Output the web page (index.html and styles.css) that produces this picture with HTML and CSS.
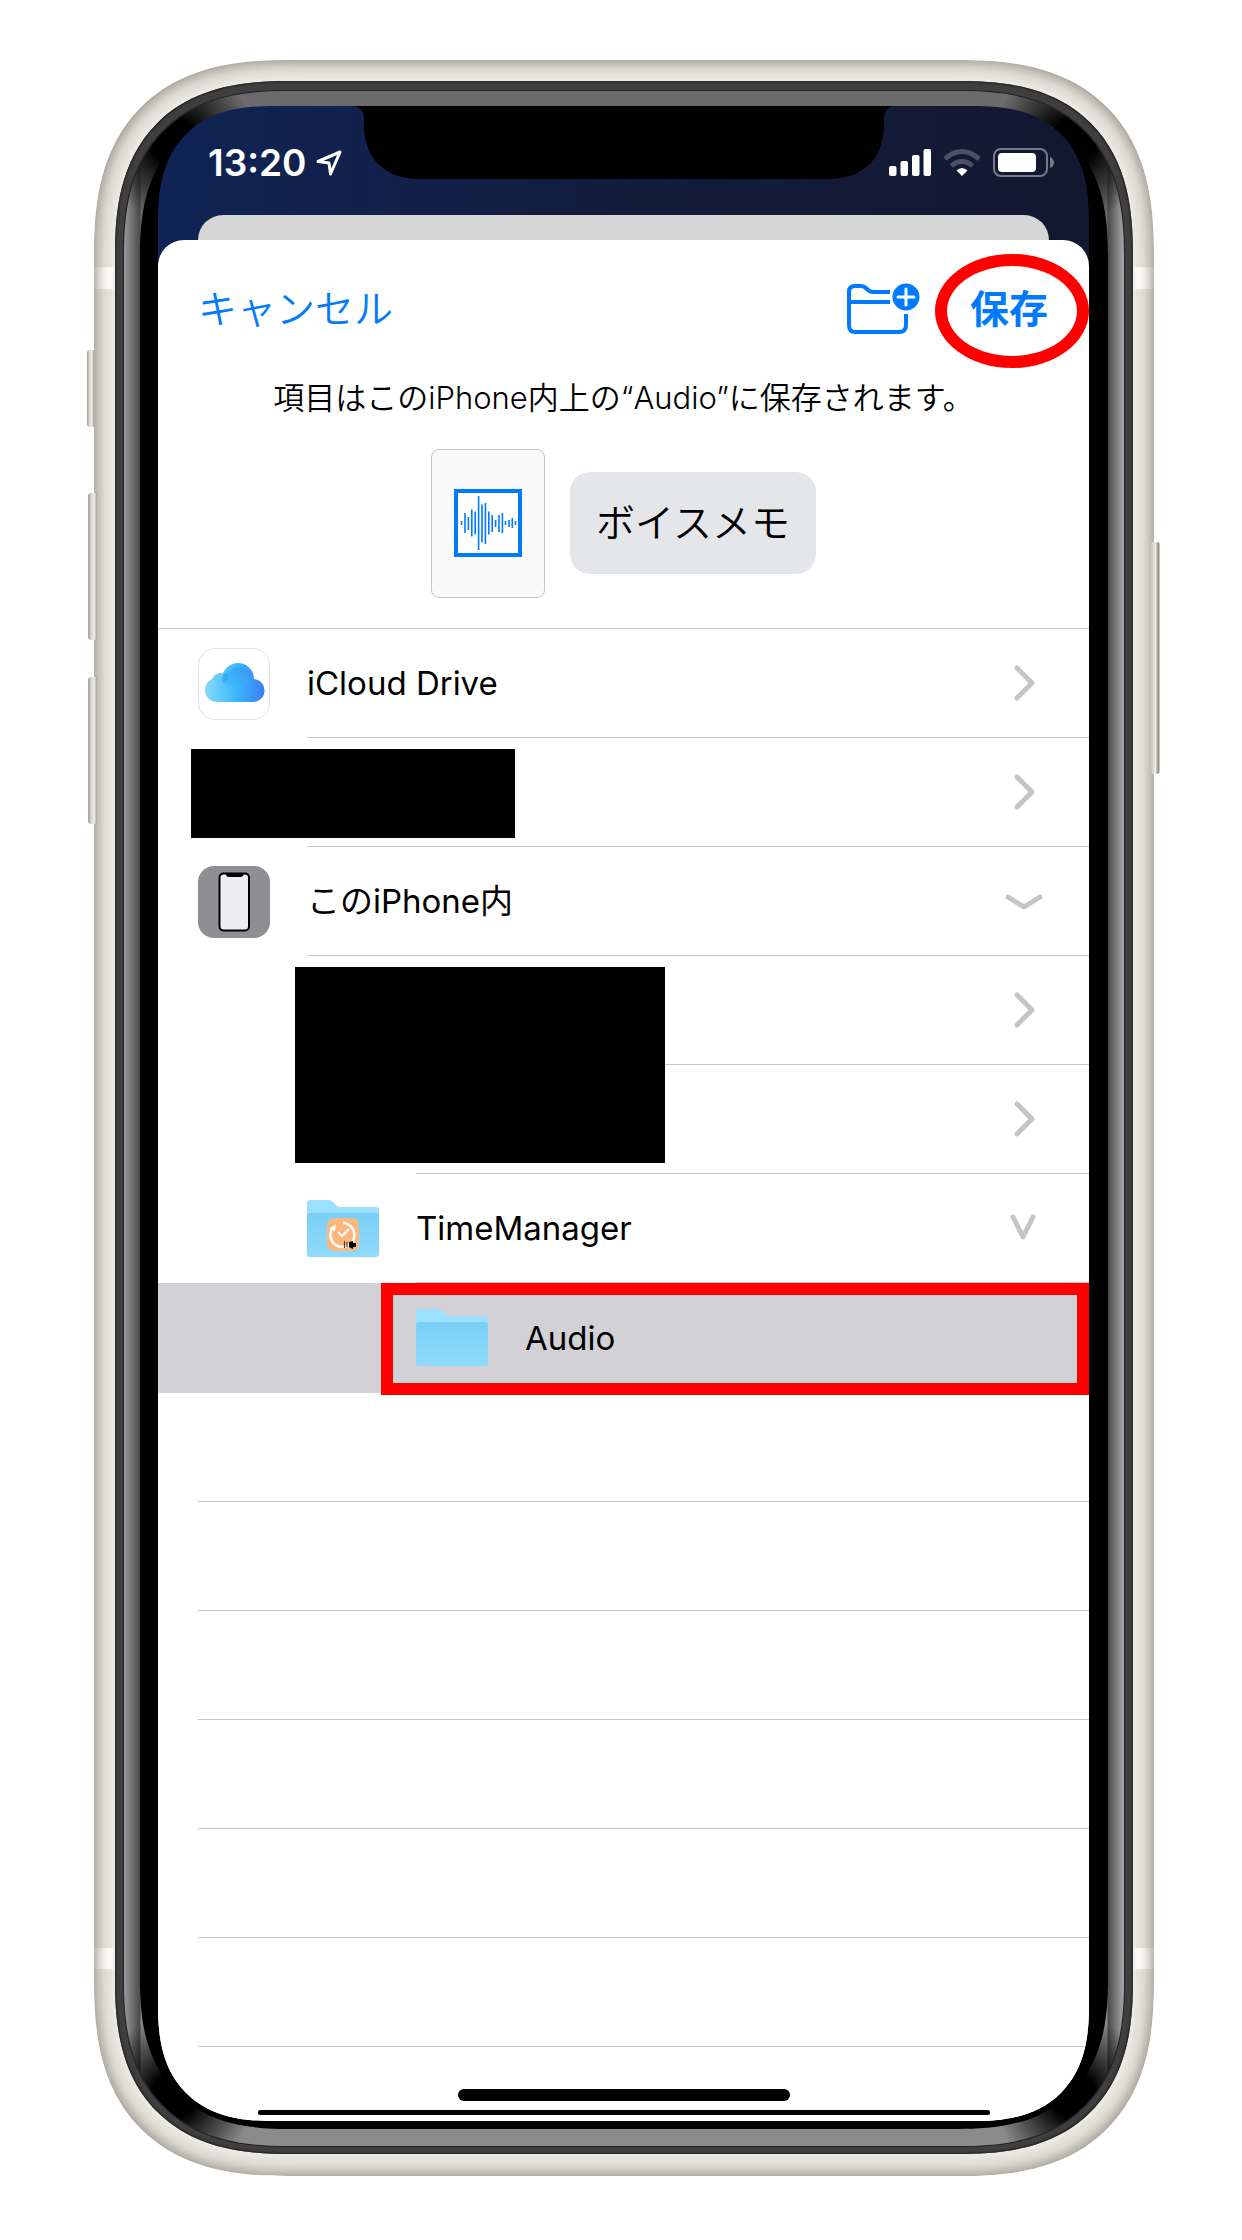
FILE: index.html
```html
<!DOCTYPE html>
<html lang="ja">
<head>
<meta charset="utf-8">
<meta name="viewport" content="width=device-width, initial-scale=1">
<title>ファイルに保存</title>
<link rel="stylesheet" href="styles.css">
</head>
<body>
<svg class="defs" width="0" height="0" aria-hidden="true">
  <defs>
    <linearGradient id="folderFront" x1="0" y1="0" x2="0" y2="1">
      <stop offset="0" stop-color="#79cff6"/>
      <stop offset="1" stop-color="#90dafc"/>
    </linearGradient>
    <linearGradient id="cloudFill" x1="0" y1="0" x2="1" y2="0">
      <stop offset="0" stop-color="#8ad9f6"/>
      <stop offset=".25" stop-color="#62cbfb"/>
      <stop offset=".55" stop-color="#38b6fc"/>
      <stop offset="1" stop-color="#3c7df4"/>
    </linearGradient>
    <linearGradient id="cloudTop" x1="0" y1="1" x2="1" y2="0">
      <stop offset="0" stop-color="#3fc2ff"/>
      <stop offset="1" stop-color="#378af0"/>
    </linearGradient>
    <symbol id="folder" viewBox="0 0 72 57">
      <path d="M3 0H22Q24 0 26 2L30 6Q31 7 33 7H69Q72 7 72 10V30H0V3Q0 0 3 0Z" fill="#9be0ff"/>
      <path d="M0 16Q0 13 3 13H69Q72 13 72 16V54Q72 57 69 57H3Q0 57 0 54Z" fill="url(#folderFront)"/>
    </symbol>
  </defs>
</svg>
<main class="phone">
  <span class="key key-mute"></span>
  <span class="key key-up"></span>
  <span class="key key-down"></span>
  <span class="key key-side"></span>
  <div class="rim"><div class="glow"><div class="bezel"><div class="screen">
    <svg class="notch" viewBox="0 0 544 73" aria-hidden="true"><path d="M0 0H544C535 1 532 5 532 13V18C532 52 512 73 476 73H68C32 73 12 52 12 18V13C12 5 9 1 0 0Z" fill="#000"/></svg>
    <header class="status">
      <div class="status-side">
        <time>13:20</time>
        <svg width="26" height="26" viewBox="0 0 26 26" aria-hidden="true"><path d="M2 11.500L24 2L14.500 24L13 13Z" fill="none" stroke="#fff" stroke-width="3" stroke-linejoin="round"/></svg>
      </div>
      <div class="status-side">
        <svg width="42" height="28" viewBox="0 0 42 28" aria-hidden="true" fill="#fff"><rect y="17" width="7.500" height="10" rx="2"/><rect x="11.500" y="12" width="7.500" height="15" rx="2"/><rect x="23" y="6" width="7.500" height="21" rx="2"/><rect x="34.500" width="7.500" height="27" rx="2"/></svg>
        <svg width="38" height="28" viewBox="0 0 38 28" aria-hidden="true"><g fill="none" stroke="#fff" stroke-opacity=".24" stroke-width="5"><path d="M2 10Q10 2.500 19 2.500T36 10"/><path d="M8.500 17Q13 12.500 19 12.500T29.500 17"/></g><path d="M19 27L13.500 21.500Q16 19 19 19T24.500 21.500Z" fill="#fff"/></svg>
        <svg width="61" height="29" viewBox="0 0 61 29" aria-hidden="true"><rect x="1" y="1" width="53" height="27" rx="7" fill="none" stroke="#fff" stroke-opacity=".42" stroke-width="2"/><rect x="5" y="5" width="38" height="19" rx="4" fill="#fff"/><path d="M57 9Q61 10.500 61 14.500T57 20Z" fill="#fff" fill-opacity=".42"/></svg>
      </div>
    </header>
    <div class="behind"></div>
    <section class="sheet">
      <nav class="toolbar">
        <button class="cancel" type="button">キャンセル</button>
        <button class="new-folder" type="button" aria-label="新規フォルダ">
          <svg width="74" height="52" viewBox="0 0 74 52"><g fill="none" stroke="#007aff" stroke-width="4"><path d="M44 9H27Q24 9 22 7L20.500 5.500Q18 3 15 3H9Q3 3 3 9V42Q3 49 9 49H53Q60 49 60 42V31"/><path d="M3 19H44"/></g><circle cx="60" cy="14" r="13.500" fill="#007aff"/><path d="M60 6V22M52 14H68" stroke="#fff" stroke-width="3" stroke-linecap="round"/></svg>
        </button>
        <button class="save" type="button">保存</button>
      </nav>
      <p class="note">項目はこのiPhone内上の“Audio”に保存されます。</p>
      <div class="item">
        <div class="thumb">
          <svg width="68" height="68" viewBox="0 0 68 68" aria-hidden="true"><rect x="2" y="2" width="64" height="64" fill="#fff" stroke="#007aff" stroke-width="4"/><path d="M7.500 32v4M11 24v20M14.400 28v13M17.800 20.500v27M21.200 22.500v23M24.600 7v54M28 15.500v38M31.400 14v41M34.800 22.500v23M38.200 26v17M41.600 31v7M45 26v17M48.400 24v20M51.500 32v4M55 31v7M58.300 29v10M61.500 32v4" stroke="#007aff" stroke-width="1.600"/></svg>
        </div>
        <button class="name" type="button">ボイスメモ</button>
      </div>
      <ul class="places">
        <li class="row">
          <svg class="icon" viewBox="0 0 72 72" aria-hidden="true"><rect x=".5" y=".5" width="71" height="71" rx="16" fill="#fff" stroke="#e2e2e2"/><path d="M18.500 54A12 12 0 0 1 14 31A9 9 0 0 1 25 25.500A16 16 0 0 1 56 31A11.500 11.500 0 0 1 54 54Z" fill="url(#cloudFill)"/><path d="M25 32A16 16 0 0 1 56 31Q50 33 46 38L27 38Q30 31 25 32Z" fill="url(#cloudTop)" opacity=".7"/><path d="M25 26Q29 24 30 28Q31 33 26 36Q23 32 25 26Z" fill="#21a9ec" opacity=".6"/></svg>
          <div class="cell"><span>iCloud Drive</span><button class="toggle" type="button" aria-label="開く"><svg width="22" height="36" viewBox="0 0 22 36"><path d="M4 3L19 18L4 33"/></svg></button></div>
        </li>
        <li class="row redacted">
          <span class="icon"></span>
          <div class="cell"><span></span><button class="toggle" type="button" aria-label="開く"><svg width="22" height="36" viewBox="0 0 22 36"><path d="M4 3L19 18L4 33"/></svg></button></div>
        </li>
        <li class="row">
          <svg class="icon" viewBox="0 0 72 72" aria-hidden="true"><rect width="72" height="72" rx="16" fill="#8e8e93"/><rect x="21.500" y="7.500" width="29.500" height="57" rx="4" fill="#eeeef0" stroke="#000" stroke-width="2"/><path d="M27 7H46V8Q45 11 43 11H31Q28 11 28 8Z"/></svg>
          <div class="cell"><span>このiPhone内</span><button class="toggle" type="button" aria-label="閉じる"><svg width="38" height="22" viewBox="0 0 38 22"><path d="M3 7L19 17L35 7"/></svg></button></div>
        </li>
        <li class="row level-2 redacted-pair">
          <span class="icon"></span>
          <div class="cell"><span></span><button class="toggle" type="button" aria-label="開く"><svg width="22" height="36" viewBox="0 0 22 36"><path d="M4 3L19 18L4 33"/></svg></button></div>
        </li>
        <li class="row level-2">
          <span class="icon"></span>
          <div class="cell"><span></span><button class="toggle" type="button" aria-label="開く"><svg width="22" height="36" viewBox="0 0 22 36"><path d="M4 3L19 18L4 33"/></svg></button></div>
        </li>
        <li class="row level-2">
          <svg class="icon" viewBox="0 -7 72 72" aria-hidden="true"><use href="#folder" width="72" height="57"/><rect x="20" y="18" width="32" height="33" rx="7" fill="#fdb67c"/><path d="M36 23A12 12 0 1 1 25 29" fill="none" stroke="#fff" stroke-width="2.500"/><path d="M22 29L29 24L28 31Z" fill="#fff"/><path d="M31 32L35 36L42 29" fill="none" stroke="#fff" stroke-width="2"/><path d="M42 42L46 41V43H49V47H46V49L42 47Z"/><path d="M40 42v5M37.500 41v7" stroke="#54402e" stroke-width="1.200"/></svg>
          <div class="cell"><span>TimeManager</span><button class="toggle" type="button" aria-label="閉じる"><svg width="28" height="30" viewBox="0 0 28 30"><path d="M3 4L13 24L23 4"/></svg></button></div>
        </li>
        <li class="row level-3 selected">
          <svg class="icon" viewBox="0 -7 72 72" aria-hidden="true"><use href="#folder" width="72" height="57"/></svg>
          <div class="cell"><span>Audio</span></div>
        </li>
        <li class="row empty"></li>
        <li class="row empty"></li>
        <li class="row empty"></li>
        <li class="row empty"></li>
        <li class="row empty"></li>
        <li class="row empty"></li>
      </ul>
      <footer class="home">
        <div class="home-bar"></div>
        <div class="home-line"></div>
      </footer>
    </section>
  </div></div></div></div>
</main>
</body>
</html>
```
FILE: styles.css
```css
*, *::before, *::after { box-sizing: border-box; }
body {
  margin: 0;
  padding: 60px 88px 65px 94px;
  background: #fff;
  color: #000;
  font-family: Inter, "Noto Sans CJK JP", sans-serif;
  font-size: 33px;
  line-height: 40px;
}
button {
  margin: 0;
  padding: 0;
  border: 0;
  background: none;
  color: inherit;
  font: inherit;
  cursor: pointer;
}
svg { display: block; flex: none; }
.defs { position: absolute; }

/* Handset */
.phone {
  position: relative;
  padding: 21px 21px 22px;
  border-radius: 164px;
  background:
    linear-gradient(#fffdf8, #fffdf8) 0 207px / 100% 22px no-repeat,
    linear-gradient(#fffdf8, #fffdf8) 0 calc(100% - 207px) / 100% 21px no-repeat,
    #e6e4dc;
  box-shadow: inset 0 0 14px 3px #99958b;
}
.rim {
  position: relative;
  padding: 10px 9px 8px;
  border-radius: 148px;
  background: #3f3f3f;
  box-shadow: inset 0 0 2px 1px #222, 0 0 4px 2px #efede6;
}
.glow {
  padding: 15px 16px 17px;
  border-radius: 140px;
  background:
    radial-gradient(circle at 50px 50px, #000 22px, transparent 80px) 0 0 / 50% 50% no-repeat,
    radial-gradient(circle at calc(100% - 50px) 50px, #000 22px, transparent 80px) 100% 0 / 50% 50% no-repeat,
    radial-gradient(circle at 50px calc(100% - 50px), #000 22px, transparent 80px) 0 100% / 50% 50% no-repeat,
    radial-gradient(circle at calc(100% - 50px) calc(100% - 50px), #000 22px, transparent 80px) 100% 100% / 50% 50% no-repeat,
    linear-gradient(90deg, #9a9a9a, #4a4a4a 16px, transparent 17px calc(100% - 17px), #4a4a4a calc(100% - 16px), #a8a8a8),
    linear-gradient(#6b6b6b 50%, #8a8a8a 50%);
  box-shadow: 0 0 0 1px #222;
}
.bezel {
  padding: 0 19px 8px 18px;
  border-radius: 130px;
  background: #000;
}
.screen {
  position: relative;
  overflow: hidden;
  border-radius: 96px;
  background: linear-gradient(90deg, #0f2454, #12204a 25%, #121d3c 50%, #131830) top / 100% 300px no-repeat, #fff;
}
@supports (corner-shape: superellipse(1.3)) {
  .phone, .rim, .glow, .bezel, .screen { corner-shape: superellipse(1.32); }
  .phone { border-radius: 194px; }
  .rim { border-radius: 174px; }
  .glow { border-radius: 165px; }
  .bezel { border-radius: 150px; }
  .screen { border-radius: 116px; }
}
.key {
  position: absolute;
  left: -6px;
  width: 9px;
  height: 147px;
  border-radius: 3px 0 0 3px;
  background: linear-gradient(90deg, #a19d92, #dedcd6 40%, #eceae6 70%, #a5a197);
}
.key-mute { top: 290px; left: -7px; width: 7px; height: 77px; }
.key-up { top: 433px; }
.key-down { top: 617px; }
.key-side {
  top: 482px;
  left: auto;
  right: -6px;
  height: 232px;
  border-radius: 0 3px 3px 0;
  background: linear-gradient(90deg, #c5c2b6, #eeece3 50%, #8f8c80 80%, #dad8cf);
}
.notch {
  position: absolute;
  top: 0;
  left: 50%;
  width: 544px;
  height: 73px;
  transform: translateX(-50%);
}

/* Status bar */
.status {
  display: flex;
  justify-content: space-between;
  align-items: center;
  height: 109px;
  padding: 4px 35px 0 50px;
  color: #fff;
  font-size: 37px;
  font-weight: 600;
}
.status-side { display: flex; align-items: center; gap: 12px; }
.status-side time + svg { margin-left: -2px; }
.behind {
  height: 25px;
  margin: 0 40px;
  border-radius: 25px 25px 0 0;
  background: #d6d6d6;
}

/* Save sheet */
.sheet { border-radius: 26px 26px 0 0; background: #fff; }
.toolbar {
  display: flex;
  align-items: center;
  height: 138px;
  padding-right: 41px;
  padding-left: 40px;
  color: #007aff;
  font-size: 39px;
}
.cancel { margin-right: auto; font-weight: 350; }
.new-folder { margin-right: 50px; }
.save { position: relative; font-weight: 700; }
.save::after {
  content: "";
  position: absolute;
  top: -17px;
  right: -41px;
  width: 154px;
  height: 114px;
  margin-top: -18px;
  border: 12px solid #f00;
  border-radius: 50%;
}
.note {
  margin: 0;
  font-size: 31px;
  font-weight: 350;
  text-align: center;
}
.item {
  display: flex;
  justify-content: center;
  align-items: center;
  gap: 25px;
  height: 211px;
  border-bottom: 1px solid #c4c4c6;
}
.thumb {
  display: grid;
  place-items: center;
  width: 114px;
  height: 149px;
  border: 1px solid #c6c6c6;
  border-radius: 8px;
  background: #fafafa;
}
.name {
  height: 102px;
  padding: 0 26px;
  border-radius: 20px;
  background: #e5e6ea;
  font-size: 39px;
  font-weight: 350;
}
.places { margin: 0; padding: 0; list-style: none; }
.row {
  position: relative;
  display: flex;
  align-items: center;
  gap: 37px;
  height: 109px;
  padding-left: 40px;
}
.level-2 { padding-left: 149px; }
.level-3 { padding-left: 258px; }
.icon { width: 72px; height: 72px; }
.cell {
  display: flex;
  flex: 1;
  justify-content: space-between;
  align-items: center;
  height: 100%;
  padding-right: 45px;
  border-bottom: 1px solid #c8c8ca;
}
.toggle { display: grid; place-items: center; width: 40px; height: 60px; }
.toggle path {
  fill: none;
  stroke: #c5c5c7;
  stroke-width: 5;
  stroke-linecap: round;
  stroke-linejoin: round;
}
.redacted::after,
.redacted-pair::after {
  content: "";
  position: absolute;
  top: 11px;
  left: 33px;
  width: 324px;
  height: 89px;
  background: #000;
}
.redacted-pair::after {
  z-index: 1;
  left: 137px;
  width: 370px;
  height: 196px;
}
.selected { height: 110px; background: #d1d1d6; }
.selected .cell { border-bottom: 0; }
.selected::after {
  content: "";
  position: absolute;
  inset: 0 0 -2px 223px;
  border: 12px solid #f00;
}
.empty::after {
  content: "";
  flex: 1;
  align-self: flex-end;
  border-bottom: 1px solid #c8c8ca;
}
.home {
  display: flex;
  flex-direction: column;
  align-items: center;
  gap: 9px;
  height: 74px;
  padding-top: 42px;
}
.home-bar { width: 332px; height: 12px; border-radius: 6px; background: #000; }
.home-line { width: 732px; height: 5px; border-radius: 2px; background: #000; }
```
